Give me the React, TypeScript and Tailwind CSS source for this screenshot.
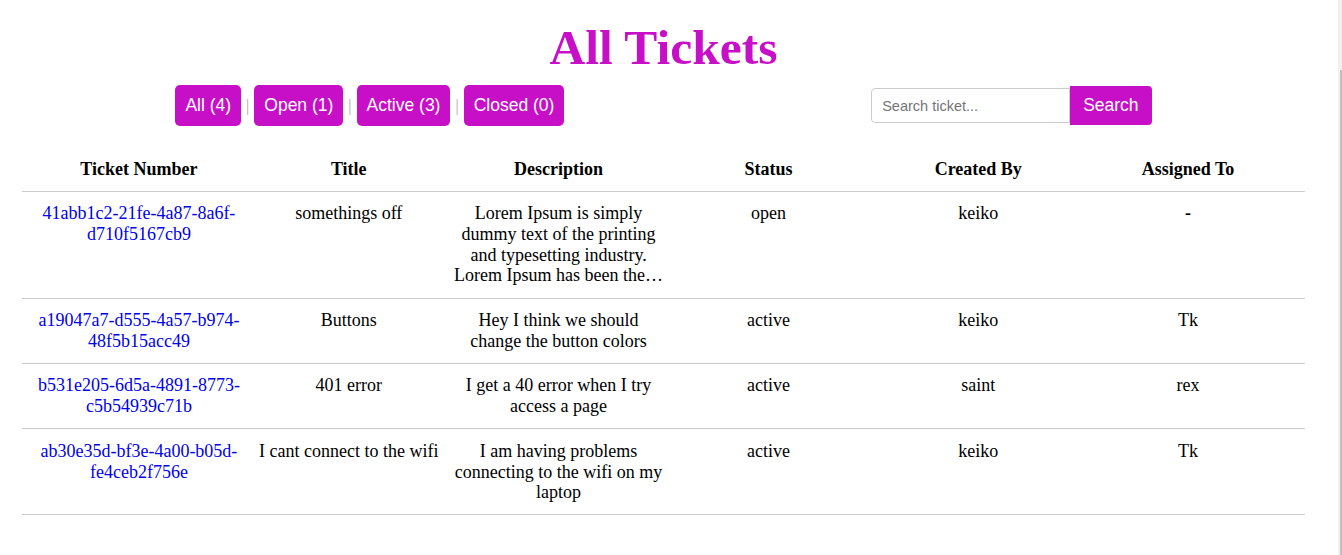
const tickets = [
  {
    id: "41abb1c2-21fe-4a87-8a6f-d710f5167cb9",
    title: "somethings off",
    description:
      "Lorem Ipsum is simply dummy text of the printing and typesetting industry. Lorem Ipsum has been the industry's standard dummy text ever since the 1500s, when an unknown printer took a galley of type.",
    status: "open",
    createdBy: "keiko",
    assignedTo: "",
  },
  {
    id: "a19047a7-d555-4a57-b974-48f5b15acc49",
    title: "Buttons",
    description: "Hey I think we should change the button colors",
    status: "active",
    createdBy: "keiko",
    assignedTo: "Tk",
  },
  {
    id: "b531e205-6d5a-4891-8773-c5b54939c71b",
    title: "401 error",
    description: "I get a 40 error when I try access a page",
    status: "active",
    createdBy: "saint",
    assignedTo: "rex",
  },
  {
    id: "ab30e35d-bf3e-4a00-b05d-fe4ceb2f756e",
    title: "I cant connect to the wifi",
    description: "I am having problems connecting to the wifi on my laptop",
    status: "active",
    createdBy: "keiko",
    assignedTo: "Tk",
  },
];

const filters = ["All (4)", "Open (1)", "Active (3)", "Closed (0)"];

const headers = ["Ticket Number", "Title", "Description", "Status", "Created By", "Assigned To"];

// cut long descriptions so the row stays short
const shorten = (text: string) => (text.length > 100 ? text.slice(0, 99).trimEnd() + "…" : text);

const App = () => {
  return (
    <div className="flex h-[555px] overflow-hidden bg-white">
      <main className="w-[1327px] shrink-0 pt-[20px] font-['Liberation_Serif',serif] text-black">
        <h1 className="text-center text-[49.5px] leading-[55px] font-bold text-[#c80fc8]">All Tickets</h1>

        <div className="mt-[10px] flex items-center justify-around px-[22px] font-['Liberation_Sans',Arial,sans-serif]">
          <div className="flex items-center">
            {filters.map((f, i) => (
              <div key={f} className="flex items-center">
                {i > 0 && (
                  <span className="mx-[5px] font-['Liberation_Serif',serif] text-[16px] text-[#aaa]">|</span>
                )}
                <button className="rounded-[5px] bg-[#c80fc8] px-[10px] py-[10px] text-[17.5px] leading-[21px] text-white">
                  {f}
                </button>
              </div>
            ))}
          </div>

          <div className="flex items-center">
            <input
              type="text"
              placeholder="Search ticket..."
              className="h-[35px] w-[199px] rounded-l-[4px] border border-[#ccc] px-[10px] text-[14.5px] outline-none placeholder:text-[#757575]"
            />
            <button className="rounded-r-[4px] bg-[#c80fc8] px-[13px] py-[9px] text-[17.5px] leading-[21px] text-white">
              Search
            </button>
          </div>
        </div>

        <div className="mx-[22px] mt-[21px] text-[18px] leading-[20.7px]">
          <div className="grid grid-cols-6 border-b border-[#ccc] px-[12px] py-[11.5px] text-center font-bold">
            {headers.map((h) => (
              <div key={h}>{h}</div>
            ))}
          </div>
          {tickets.map((t) => (
            <div key={t.id} className="grid grid-cols-6 border-b border-[#ccc] px-[12px] py-[11.5px] text-center">
              <a href="#" className="text-[#0000ee]">
                {t.id}
              </a>
              <div>{t.title}</div>
              <div>{shorten(t.description)}</div>
              <div>{t.status}</div>
              <div>{t.createdBy}</div>
              <div>{t.assignedTo || <b>-</b>}</div>
            </div>
          ))}
        </div>
      </main>

      <div className="w-[11px] shrink-0" />
      <div className="flex w-[4px] shrink-0 flex-col bg-[#f1f1f1]">
        <div className="mt-[70px] ml-[2px] flex-1 bg-[#c1c1c1]" />
      </div>
    </div>
  );
};

export default App;
